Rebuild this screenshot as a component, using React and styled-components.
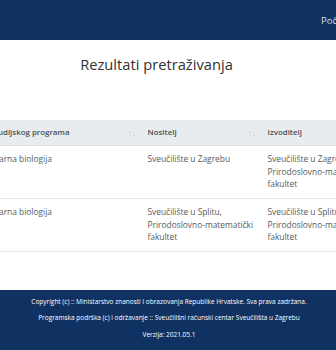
import React from 'react';
import styled, { createGlobalStyle } from 'styled-components';

const Global = createGlobalStyle`
  html, body {
    margin: 0;
    padding: 0;
    width: 336px;
    height: 350px;
    overflow: hidden;
    background: #fff;
    font-family: "Open Sans", "Noto Sans", sans-serif;
  }
`;

const Page = styled.div`
  display: flex;
  flex-direction: column;
  height: 350px;
  width: 336px;
  overflow: hidden;
`;

const Navbar = styled.header`
  flex: none;
  height: 40px;
  background: #103263;
  display: flex;
  align-items: center;
  padding-left: 321px;
  overflow: hidden;
  white-space: nowrap;
`;

const NavLink = styled.span`
  color: #d8dee8;
  font-size: 9.5px;
  margin-right: 14px;
`;

const Main = styled.main`
  flex: 1;
  display: flex;
  flex-direction: column;
  min-height: 0;
`;

const Title = styled.h1`
  margin: 14px 23px 0 0;
  text-align: center;
  font-weight: 400;
  font-size: 14.7px;
  line-height: 20px;
  color: #333;
`;

const TableWrap = styled.div`
  margin-top: 46px;
  margin-left: -41px;
`;

const Table = styled.table`
  width: ${(p) => p.$w}px;
  border-collapse: collapse;
  table-layout: fixed;
  font-size: 8.4px;
  color: #555b61;
`;

const Th = styled.th`
  width: ${(p) => p.$w}px;
  height: 25px;
  padding: 0 3px 0 9px;
  box-sizing: border-box;
  background: #e9ecef;
  text-align: left;
  font-size: 7.9px;
  font-weight: 600;
  color: #4a5057;
  border-bottom: 1px solid #dee2e6;
  white-space: nowrap;
`;

const ThInner = styled.div`
  display: flex;
  align-items: center;
  justify-content: space-between;
`;

const SortIcon = styled.span`
  font-size: 8.5px;
  font-weight: 400;
  color: #c6cbd0;
  letter-spacing: -0.5px;
`;

const Td = styled.td`
  vertical-align: top;
  padding: 7.5px 3px 7px 9px;
  line-height: 12.5px;
  border-bottom: 1px solid #e3e6e9;
`;

const Footer = styled.footer`
  flex: none;
  height: 60px;
  background: #103263;
  color: #fff;
  font-size: 6.5px;
  text-align: center;
  padding: 3.5px 0 0 2px;
  box-sizing: border-box;
`;

const FooterLine = styled.p`
  margin: 0;
  line-height: 16.7px;
  white-space: nowrap;
`;

const columns = [
  { title: 'Naziv studijskog programa', w: 179.5 },
  { title: 'Nositelj', w: 120 },
  { title: 'Izvoditelj', w: 120 },
];

const rows = [
  [
    'Molekularna biologija',
    'Sveučilište u Zagrebu',
    'Sveučilište u Zagrebu, Prirodoslovno-matematički fakultet',
  ],
  [
    'Molekularna biologija',
    'Sveučilište u Splitu, Prirodoslovno-matematički fakultet',
    'Sveučilište u Splitu, Prirodoslovno-matematički fakultet',
  ],
];

const tableWidth = columns.reduce((s, c) => s + c.w, 0);

export default function App() {
  return (
    <>
      <Global />
      <Page>
        <Navbar>
          <NavLink>Početna</NavLink>
          <NavLink>Pretraživanje</NavLink>
        </Navbar>
        <Main>
          <Title>Rezultati pretraživanja</Title>
          <TableWrap>
            <Table $w={tableWidth}>
              <thead>
                <tr>
                  {columns.map((c) => (
                    <Th key={c.title} $w={c.w}>
                      <ThInner>
                        <span>{c.title}</span>
                        <SortIcon>↑↓</SortIcon>
                      </ThInner>
                    </Th>
                  ))}
                </tr>
              </thead>
              <tbody>
                {rows.map((r, i) => (
                  <tr key={i}>
                    {r.map((cell, j) => (
                      <Td key={j}>{cell}</Td>
                    ))}
                  </tr>
                ))}
              </tbody>
            </Table>
          </TableWrap>
        </Main>
        <Footer>
          <FooterLine>
            Copyright (c) :: Ministarstvo znanosti i obrazovanja Republike Hrvatske. Sva prava zadržana.
          </FooterLine>
          <FooterLine>
            Programska podrška (c) i održavanje :: Sveučilišni računski centar Sveučilišta u Zagrebu
          </FooterLine>
          <FooterLine>Verzija: 2021.05.1</FooterLine>
        </Footer>
      </Page>
    </>
  );
}
